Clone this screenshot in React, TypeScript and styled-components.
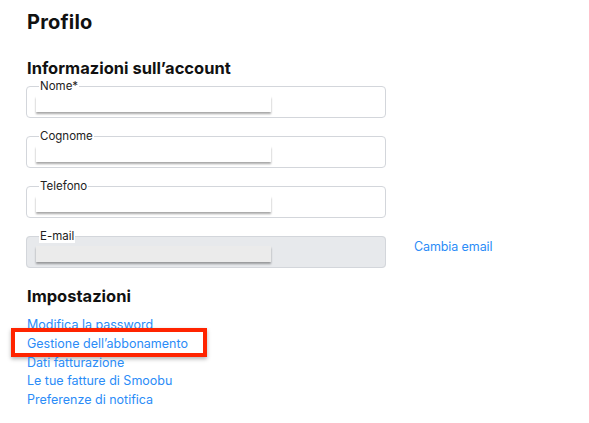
import React from 'react';
import styled, { createGlobalStyle } from 'styled-components';

const GlobalStyle = createGlobalStyle`
  body {
    margin: 0;
    background: #ffffff;
    font-family: Inter, "Noto Sans", sans-serif;
    color: #111111;
  }
`;

const Page = styled.div`
  padding: 9px 26px 0 26px;
`;

const Title = styled.h1`
  margin: 0 0 0 1px;
  font-size: 20px;
  line-height: 26px;
  font-weight: 700;
  letter-spacing: 0.2px;
`;

const SectionTitle = styled.h2<{ $top: number }>`
  margin: ${({ $top }) => `${$top}px 0 0 1px`};
  font-size: 16.5px;
  line-height: 20px;
  font-weight: 700;
`;

const Fields = styled.div`
  display: flex;
  flex-direction: column;
  gap: 12px;
  margin-top: 2px;
`;

const FieldRow = styled.div`
  display: flex;
  align-items: center;
  gap: 28px;
`;

const Field = styled.fieldset<{ $disabled?: boolean }>`
  margin: 0;
  width: 360px;
  box-sizing: border-box;
  padding: 0 0 5px 9px;
  border: 1px solid #d3d6db;
  border-radius: 4px;
  background: ${({ $disabled }) => ($disabled ? '#e7e9ec' : '#ffffff')};
`;

const Legend = styled.legend`
  margin-left: 3px;
  padding: 0 1px;
  font-size: 11.5px;
  line-height: 13px;
  color: #222222;
  background: #ffffff;
`;

const InputBar = styled.div<{ $disabled?: boolean }>`
  margin-top: 3px;
  width: 235px;
  height: 16px;
  background: ${({ $disabled }) => ($disabled ? '#ebebeb' : '#ffffff')};
  box-shadow: 0 2px 2px rgba(0, 0, 0, 0.35);
`;

const Link = styled.a`
  color: #2b8cf7;
  font-size: 12.5px;
  text-decoration: none;
  cursor: pointer;
`;

const SideLink = styled(Link)`
  margin-top: -6px;
  letter-spacing: -0.1px;
`;

const LinkList = styled.ul`
  list-style: none;
  margin: 8px 0 0 1px;
  padding: 0;
  display: flex;
  flex-direction: column;
`;

const LinkItem = styled.li<{ $highlight?: boolean }>`
  position: relative;
  height: 18.75px;
  line-height: 18.75px;

  ${({ $highlight }) =>
    $highlight &&
    `
    &::after {
      content: '';
      position: absolute;
      left: -16px;
      top: -5px;
      width: 196px;
      height: 29px;
      box-sizing: border-box;
      border: 4px solid #ff2400;
      box-shadow: 0 2px 4px rgba(0, 0, 0, 0.3);
      pointer-events: none;
    }
  `}
`;

const fields = [
  { label: 'Nome*' },
  { label: 'Cognome' },
  { label: 'Telefono' },
];

const links = [
  'Modifica la password',
  'Gestione dell’abbonamento',
  'Dati fatturazione',
  'Le tue fatture di Smoobu',
  'Preferenze di notifica',
];

export default function App() {
  return (
    <Page>
      <GlobalStyle />
      <Title>Profilo</Title>
      <SectionTitle $top={23}>Informazioni sull’account</SectionTitle>
      <Fields>
        {fields.map((f) => (
          <Field key={f.label}>
            <Legend>{f.label}</Legend>
            <InputBar />
          </Field>
        ))}
        <FieldRow>
          <Field $disabled>
            <Legend>E-mail</Legend>
            <InputBar $disabled />
          </Field>
          <SideLink>Cambia email</SideLink>
        </FieldRow>
      </Fields>
      <SectionTitle $top={18}>Impostazioni</SectionTitle>
      <LinkList>
        {links.map((l, i) => (
          <LinkItem key={l} $highlight={i === 1}>
            <Link>{l}</Link>
          </LinkItem>
        ))}
      </LinkList>
    </Page>
  );
}
